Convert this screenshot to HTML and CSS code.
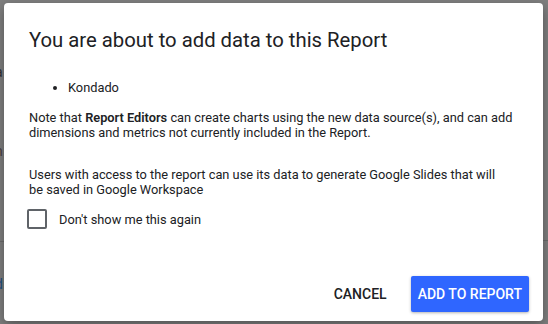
FILE: index.html
```html
<!DOCTYPE html>
<html>
<head>
<meta charset="utf-8">
<link rel="stylesheet" href="styles.css">
</head>
<body>
<div class="backdrop">
  <div class="behind">
    <span class="frag f1">a</span>
    <span class="frag f2">n</span>
    <span class="rule r1"></span>
    <span class="rule r2"></span>
    <span class="frag f3">d</span>
  </div>
  <div class="dialog">
    <h1 class="title">You are about to add data to this Report</h1>
    <ul class="sources">
      <li>Kondado</li>
    </ul>
    <p class="text">Note that <b>Report Editors</b> can create charts using the new data source(s), and can add dimensions and metrics not currently included in the Report.</p>
    <p class="text second">Users with access to the report can use its data to generate Google Slides that will be saved in Google Workspace</p>
    <label class="check"><span class="box"></span><span>Don't show me this again</span></label>
    <div class="actions">
      <button class="btn cancel">Cancel</button>
      <button class="btn primary">Add to report</button>
    </div>
  </div>
</div>
</body>
</html>
```
FILE: styles.css
```css
html, body {
  margin: 0;
  padding: 0;
}
body {
  width: 548px;
  height: 324px;
  overflow: hidden;
  background: #7f7f7f;
  font-family: Roboto, "Liberation Sans", sans-serif;
}
.backdrop {
  position: relative;
  width: 548px;
  height: 324px;
  padding: 3px 0 0 4px;
  box-sizing: border-box;
}
.behind {
  position: absolute;
  inset: 0;
}
.frag {
  position: absolute;
  left: -5px;
  font-size: 14px;
  color: #2e2e33;
}
.f1 { top: 64px; }
.f2 { top: 143px; color: #4a4040; }
.f3 { top: 276px; color: #1f4f7f; }
.rule {
  position: absolute;
  height: 1px;
  background: #6c6c6c;
}
.r1 { left: 0; width: 4px; top: 241px; }
.r2 { right: 0; width: 5px; top: 240px; }
.dialog {
  position: relative;
  width: 539px;
  height: 318px;
  box-sizing: border-box;
  background: #fff;
  border-radius: 4px;
  box-shadow: 0 4px 12px rgba(0,0,0,0.35);
  padding: 24px 18px 0 25px;
  display: flex;
  flex-direction: column;
}
.title {
  margin: 0;
  font-size: 20.3px;
  font-weight: 400;
  line-height: 26px;
  color: #202124;
}
.sources {
  margin: 27px 0 0;
  padding-left: 39px;
  font-size: 12.8px;
  line-height: 16px;
  color: #202124;
}
.text {
  margin: 14px 0 0;
  font-size: 12.8px;
  line-height: 15px;
  color: #202124;
}
.text b {
  font-weight: 600;
}
.text.second {
  margin-top: 27px;
  padding-right: 24px;
}
.check {
  display: flex;
  align-items: center;
  gap: 12px;
  margin-top: 12px;
  margin-left: -2px;
  font-size: 12.8px;
  color: #202124;
}
.box {
  width: 16px;
  height: 16px;
  border: 2px solid #5f6368;
  border-radius: 2px;
}
.actions {
  margin-top: auto;
  margin-bottom: 9px;
  display: flex;
  justify-content: flex-end;
  align-items: center;
  gap: 8px;
  margin-right: -4px;
}
.btn {
  font-family: Roboto, "Liberation Sans", sans-serif;
  font-size: 14px;
  font-weight: 500;
  text-transform: uppercase;
  border: none;
  border-radius: 2px;
  height: 36px;
  padding: 0 7px;
  cursor: pointer;
}
.cancel {
  background: transparent;
  color: #202124;
  margin-right: 9px;
}
.primary {
  background: #2f66ff;
  color: #fff;
  box-shadow: 0 1px 3px rgba(0,0,0,0.3);
}
```
